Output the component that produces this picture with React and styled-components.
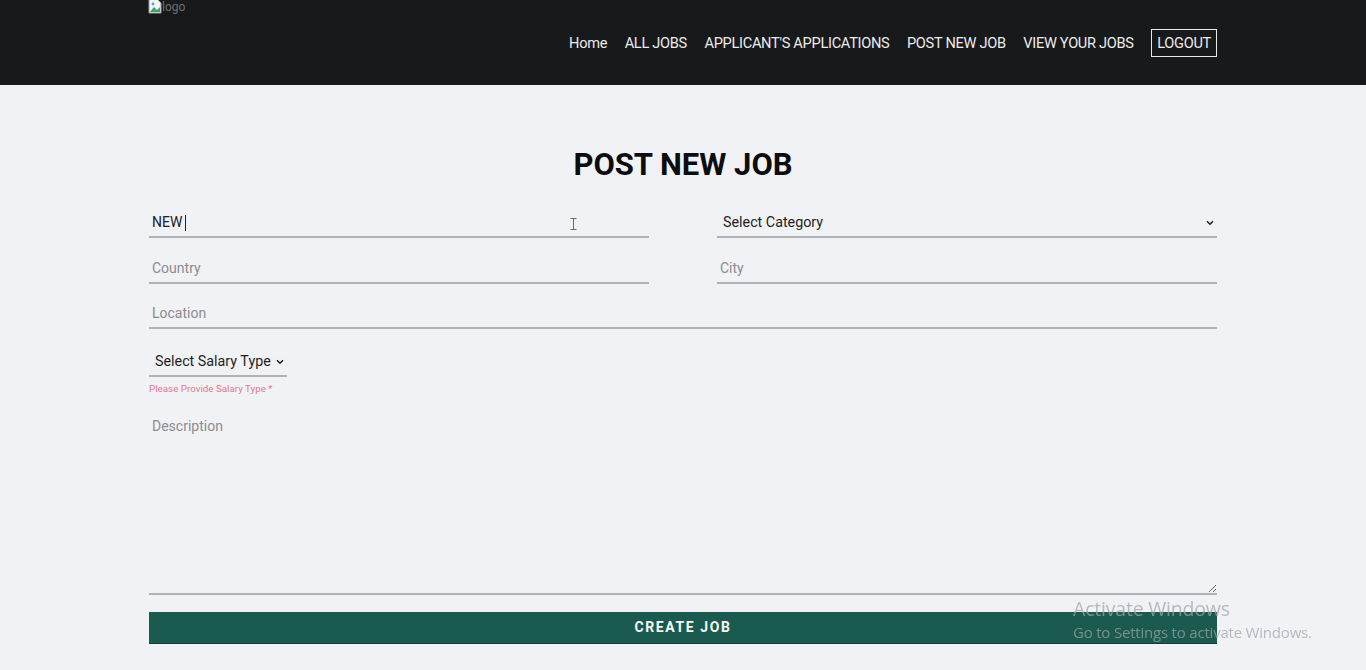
import React from "react";
import styled, { createGlobalStyle } from "styled-components";

const GlobalStyle = createGlobalStyle`
  * { box-sizing: border-box; }
  body {
    margin: 0;
    background: #f1f2f6;
    font-family: Roboto, "Liberation Sans", sans-serif;
    overflow: hidden;
  }
`;

const Header = styled.header`
  height: 85px;
  background: #18191b;
`;

const HeaderInner = styled.div`
  width: 1068px;
  margin: 0 auto;
  height: 100%;
  display: flex;
  justify-content: space-between;
  align-items: flex-start;
`;

const Brand = styled.div`
  display: flex;
  align-items: center;
  height: 14px;
  margin-left: -1px;
  font-size: 12px;
  color: #6e6f72;
  svg {
    margin-top: -2px;
  }
`;

const Nav = styled.nav`
  display: flex;
  align-items: center;
  gap: 17.5px;
  margin-top: 29px;
`;

const NavLink = styled.a`
  color: #ececec;
  font-size: 14.6px;
  letter-spacing: -0.3px;
  text-decoration: none;
  line-height: 28px;
  padding: ${(p) => (p.$boxed ? "0 5px" : "0")};
  border: ${(p) => (p.$boxed ? "1px solid #e8e8e8" : "none")};
  height: 28px;
  display: flex;
  align-items: center;
`;

const Main = styled.main`
  width: 1068px;
  margin: 0 auto;
`;

const Title = styled.h1`
  margin: 60px 0 23px;
  text-align: center;
  font-size: 31px;
  font-weight: 700;
  color: #0d0d10;
  line-height: 40px;
`;

const Form = styled.form`
  display: flex;
  flex-direction: column;
`;

const Row = styled.div`
  display: grid;
  grid-template-columns: ${(p) => (p.$single ? "1fr" : "1fr 1fr")};
  column-gap: 68px;
  margin-bottom: 15.5px;
`;

const Input = styled.input`
  height: 30px;
  width: 100%;
  border: none;
  border-bottom: 2px solid #b2b2b4;
  background: transparent;
  font-family: Roboto, sans-serif;
  font-size: 14px;
  color: #202124;
  padding: 0 3px;
  outline: none;
  &::placeholder {
    color: #8b8c90;
  }
`;

const CaretWrap = styled.div`
  position: relative;
`;

const Caret = styled.span`
  position: absolute;
  left: 36px;
  top: 7px;
  width: 1px;
  height: 16px;
  background: #222;
`;

const Cursor = styled.svg`
  position: absolute;
  left: 421px;
  top: 10px;
`;

const SelectWrap = styled.div`
  position: relative;
  width: ${(p) => p.$width || "100%"};
`;

const Select = styled.select`
  appearance: none;
  -webkit-appearance: none;
  height: 30px;
  width: 100%;
  border: none;
  border-bottom: 2px solid #b2b2b4;
  border-radius: 0;
  background: transparent;
  font-family: Roboto, sans-serif;
  font-size: 14.3px;
  color: #1f1f22;
  padding: 0 12px 0 ${(p) => p.$padLeft || "6px"};
  outline: none;
`;

const Chevron = styled.svg`
  position: absolute;
  right: ${(p) => p.$right || "4px"};
  top: 12px;
  pointer-events: none;
`;

const SalaryBox = styled.div`
  margin-top: 2px;
`;

const ErrorText = styled.p`
  margin: 6px 0 14px;
  font-size: 9.8px;
  color: #e07a8a;
`;

const TextArea = styled.textarea`
  width: 100%;
  height: 187px;
  border: none;
  border-bottom: 2px solid #b2b2b4;
  background: transparent;
  font-family: Roboto, sans-serif;
  font-size: 14px;
  padding: 10px 3px;
  outline: none;
  resize: vertical;
  &::placeholder {
    color: #8b8c90;
  }
`;

const SubmitButton = styled.button`
  margin-top: 17px;
  height: 32px;
  width: 100%;
  background: #1b5a4f;
  border: none;
  border-bottom: 1px solid #0f3f37;
  color: #f4f7f6;
  font-family: Roboto, sans-serif;
  font-weight: 700;
  font-size: 14px;
  letter-spacing: 1.6px;
`;

const Watermark = styled.div`
  position: fixed;
  left: 1073px;
  top: 597px;
  font-family: "Open Sans", "Noto Sans", sans-serif;
  color: rgba(160, 163, 168, 0.72);
  line-height: 1.2;
  pointer-events: none;
`;

const WatermarkTitle = styled.div`
  font-size: 19.5px;
  letter-spacing: -0.2px;
`;

const WatermarkSub = styled.div`
  font-size: 15px;
  letter-spacing: -0.2px;
  margin-top: 3px;
`;

const BrokenImage = () => (
  <svg width="14" height="16" viewBox="0 0 14 16">
    <path d="M1 1h8l4 4v10H1z" fill="#f4f4f4" stroke="#9a9a9a" />
    <path d="M2 14l4-5 3 3 3-3v5z" fill="#3aa56b" />
    <circle cx="5" cy="6" r="1.4" fill="#5aa0d8" />
  </svg>
);

const SmallChevron = ({ right }) => (
  <Chevron $right={right} width="8" height="6" viewBox="0 0 8 6">
    <path d="M1 1.2l3 3 3-3" stroke="#222" strokeWidth="1.6" fill="none" />
  </Chevron>
);

const navItems = [
  "Home",
  "ALL JOBS",
  "APPLICANT'S APPLICATIONS",
  "POST NEW JOB",
  "VIEW YOUR JOBS",
];

const App = () => {
  return (
    <>
      <GlobalStyle />
      <Header>
        <HeaderInner>
          <Brand>
            <BrokenImage />
            <span>logo</span>
          </Brand>
          <Nav>
            {navItems.map((item) => (
              <NavLink key={item} href="#">
                {item}
              </NavLink>
            ))}
            <NavLink $boxed href="#">
              LOGOUT
            </NavLink>
          </Nav>
        </HeaderInner>
      </Header>
      <Main>
        <Title>POST NEW JOB</Title>
        <Form onSubmit={(e) => e.preventDefault()}>
          <Row>
            <CaretWrap>
              <Input defaultValue="NEW" />
              <Caret />
              <Cursor width="7" height="12" viewBox="0 0 7 12">
                <path
                  d="M0.5 0.5h6M3.5 0.5v11M0.5 11.5h6"
                  stroke="#6b6b6b"
                  fill="none"
                  strokeWidth="1"
                />
              </Cursor>
            </CaretWrap>
            <SelectWrap>
              <Select defaultValue="">
                <option value="">Select Category</option>
              </Select>
              <SmallChevron right="3px" />
            </SelectWrap>
          </Row>
          <Row>
            <Input placeholder="Country" />
            <Input placeholder="City" />
          </Row>
          <Row $single>
            <Input placeholder="Location" />
          </Row>
          <SalaryBox>
            <SelectWrap $width="138px">
              <Select defaultValue="">
                <option value="">Select Salary Type</option>
              </Select>
              <SmallChevron right="3px" />
            </SelectWrap>
            <ErrorText>Please Provide Salary Type *</ErrorText>
          </SalaryBox>
          <TextArea placeholder="Description" />
          <SubmitButton type="submit">CREATE JOB</SubmitButton>
        </Form>
      </Main>
      <Watermark>
        <WatermarkTitle>Activate Windows</WatermarkTitle>
        <WatermarkSub>Go to Settings to activate Windows.</WatermarkSub>
      </Watermark>
    </>
  );
};

export default App;
